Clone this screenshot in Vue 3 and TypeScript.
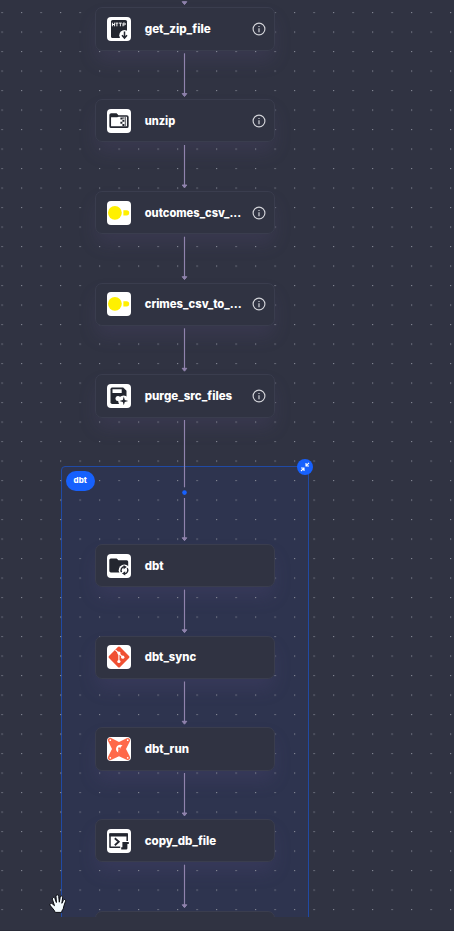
<script setup lang="ts">
type IconName = 'http' | 'zip' | 'duck' | 'purge' | 'folder' | 'git' | 'dbt' | 'shell'

interface FlowNode {
  label: string
  icon: IconName
  y: number
  info: boolean
  width: number
}

interface Edge {
  from: number
  to: number
  arrow: boolean
}

const nodes: FlowNode[] = [
  { label: 'get_zip_file', icon: 'http', y: 7.3, info: true, width: 66 },
  { label: 'unzip', icon: 'zip', y: 99.1, info: true, width: 30.5 },
  { label: 'outcomes_csv_...', icon: 'duck', y: 190.9, info: true, width: 96.5 },
  { label: 'crimes_csv_to_...', icon: 'duck', y: 282.5, info: true, width: 97 },
  { label: 'purge_src_files', icon: 'purge', y: 374.3, info: true, width: 87.5 },
  { label: 'dbt', icon: 'folder', y: 544.1, info: false, width: 19 },
  { label: 'dbt_sync', icon: 'git', y: 635.7, info: false, width: 51.5 },
  { label: 'dbt_run', icon: 'dbt', y: 727.4, info: false, width: 44.3 },
  { label: 'copy_db_file', icon: 'shell', y: 819.2, info: false, width: 71.5 },
]

const edges: Edge[] = [
  { from: 3, to: 5.6, arrow: true },
  { from: 53.3, to: 97.5, arrow: true },
  { from: 145, to: 188.9, arrow: true },
  { from: 236.7, to: 280.6, arrow: true },
  { from: 328.3, to: 372.2, arrow: true },
  { from: 420, to: 487.3, arrow: false },
  { from: 498, to: 541.7, arrow: true },
  { from: 589.6, to: 633.7, arrow: true },
  { from: 681.5, to: 725.2, arrow: true },
  { from: 773, to: 816.9, arrow: true },
  { from: 864.7, to: 908.7, arrow: true },
]
</script>

<template>
  <main class="screen">
    <section class="canvas">
      <div class="cluster"></div>
      <div v-for="n in nodes" :key="'s' + n.label" class="shade" :style="{ top: n.y + 'px' }"></div>
      <svg class="layer" width="454" height="917">
        <defs>
          <pattern id="grid" x="1.5" y="12" width="19.5" height="19.5" patternUnits="userSpaceOnUse">
            <rect width="1.2" height="1.1" fill="#828592" />
          </pattern>
        </defs>
        <rect y="8" width="454" height="909" fill="url(#grid)" />
        <g v-for="e in edges" :key="e.from" stroke="#9083ad" fill="#9083ad">
          <line x1="184.5" x2="184.5" :y1="e.from" :y2="e.arrow ? e.to - 3 : e.to" stroke-width="1.15" />
          <path v-if="e.arrow" :d="`M182.2 ${e.to - 3.9}H186.8L184.5 ${e.to - 1}Z`" stroke-width="1" stroke-linejoin="round" />
        </g>
        <circle cx="184.5" cy="492.6" r="2.3" fill="#1761fd" />
      </svg>

      <article v-for="n in nodes" :key="n.label" class="node" :style="{ top: n.y + 'px' }">
        <span class="tile">
          <svg v-if="n.icon === 'http'" viewBox="0 0 24 24">
            <rect x="4" y="3" width="16" height="18" rx="1.6" fill="#23262f" />
            <path d="M5.4 5.7v3.6M7.6 5.7v3.6M5.4 7.5h2.2M8.5 6.1h2.8M9.9 6.1v3.2M12 6.1h2.8M13.4 6.1v3.2M16 9.3V6.1h1.2q1.3 0 1.3.9t-1.3.9H16" fill="none" stroke="#fff" stroke-width=".95" />
            <circle cx="17.5" cy="18.2" r="5.2" fill="#fff" />
            <path d="M17.5 14.5v6.2M15 18.3l2.5 2.8 2.5-2.8" fill="none" stroke="#23262f" stroke-width="1.5" />
          </svg>
          <svg v-else-if="n.icon === 'zip'" viewBox="0 0 24 24">
            <path d="M3.2 6q0-1 1-1h5l1.8 2h8.8q1 0 1 1v9.2q0 1-1 1H4.2q-1 0-1-1z" fill="#fff" stroke="#23262f" stroke-width="1.7" />
            <path d="M3 5h6.6l2 2.2-1.2 1H3z" fill="#23262f" />
            <path d="M13.4 8.5h2v2h-2zm2 2.2h2v2h-2zm-2 2.1h2v2h-2zm2 2.1h2v2h-2zm0-6.4h2v1h-2z" fill="#23262f" />
            <path d="M18.3 8v9" stroke="#23262f" stroke-width=".8" />
          </svg>
          <svg v-else-if="n.icon === 'duck'" viewBox="0 0 24 24">
            <circle cx="7.9" cy="11.8" r="6.9" fill="#fff000" />
            <path d="M16.4 9.2h3.2a2.6 2.6 0 0 1 0 5.2h-3.2z" fill="#fff000" />
          </svg>
          <svg v-else-if="n.icon === 'purge'" viewBox="0 0 24 24">
            <path d="M5 3.5h11.2l3.3 3.2v8.5L14 20H5.2q-1.7 0-1.7-1.7V5.2Q3.5 3.5 5 3.5z" fill="#23262f" />
            <path d="M5.5 5.2h9.2V9H5.5z" fill="#fff" />
            <circle cx="11" cy="14.6" r="2.5" fill="#fff" />
            <circle cx="16.7" cy="17" r="5.5" fill="#fff" />
            <path d="M16.8 12.6l1 3.3 3.4 1-3.4 1-1 3.4-1-3.4-3.4-1 3.4-1z" fill="#23262f" />
          </svg>
          <svg v-else-if="n.icon === 'folder'" viewBox="0 0 24 24">
            <path d="M2.3 6q0-1.6 1.6-1.6h5.7l1.9 1.9h8.2q1.5 0 1.5 1.5v9q0 1.6-1.5 1.6H3.9q-1.6 0-1.6-1.6z" fill="#23262f" />
            <circle cx="17.4" cy="16.2" r="5.7" fill="#fff" />
            <path d="M17.2 12.8a3.5 3.5 0 0 0-2.6 5.4M17.6 19.7a3.5 3.5 0 0 0 2.6-5.5" fill="none" stroke="#23262f" stroke-width="1.4" />
            <path d="M16.6 11l3.2 2.1-3.2 2.2zM18.2 17.2V21.5L15 19.4z" fill="#23262f" />
          </svg>
          <svg v-else-if="n.icon === 'git'" viewBox="0 0 24 24">
            <path d="M10.9 2q1.1-1.1 2.2 0l8.9 8.9q1.1 1.1 0 2.2l-8.9 8.9q-1.1 1.1-2.2 0l-8.9-8.9q-1.1-1.1 0-2.2z" fill="#f05033" />
            <path d="M8.4 4.8l3.5 3.5v8M12 8.4l3.6 3.7" fill="none" stroke="#fff" stroke-width="1.15" />
            <g fill="#fff"><circle cx="11.9" cy="8.1" r="1.6" /><circle cx="11.9" cy="16.5" r="1.6" /><circle cx="15.8" cy="12.2" r="1.6" /></g>
          </svg>
          <svg v-else-if="n.icon === 'dbt'" viewBox="0 0 24 24">
            <path d="M3.6.8Q1.4.7.9 2.3q-.3 1.1.4 2.3L5 12l-3.8 7.5q-.8 1.5.1 2.8 1.2 1.4 3.2.5L12 19.2l7.6 3.6q1.8.8 3-.5 1-1.2.2-2.8L19 12l3.8-7.5q.8-1.6-.2-2.7-1.2-1.4-3-.5L12 5 4.6 1.2z" fill="#ff694a" />
            <path d="M15.5 8.6a4.1 4.1 0 0 0-6.3 2.2 4 4 0 0 0 2.2 4.7 1.7 1.7 0 0 1-.3-1.2c0-1.9 2.7-1.3 2.7-3.2 0-1.1.6-1.8 1.7-2.5z" fill="#fff" />
            <path d="M11.2 10.5h2.5v2.3h-2.5z" fill="#ff694a" />
            <g fill="#fff"><circle cx="3.3" cy="3.2" r=".85" /><circle cx="20.7" cy="3.2" r=".85" /><circle cx="3.3" cy="20.8" r=".85" /><circle cx="20.7" cy="20.8" r=".85" /></g>
          </svg>
          <svg v-else viewBox="0 0 24 24">
            <path d="M3 5h17.2v13.3H3z" fill="#fff" stroke="#23262f" stroke-width="1.5" stroke-linejoin="round" />
            <path d="M2.4 4.4h18.4v3.2H2.4z" fill="#23262f" />
            <path d="M7.8 9.3l4 3.5-4 3.5" fill="none" stroke="#23262f" stroke-width="1.8" />
            <path d="M13.2 12h9v9.5h-9z" fill="#fff" />
            <path d="M15.4 13h6.4v2h-1.4v4.2q0 1.3-1.2 1.3h-5v-2.3h1.2z" fill="#23262f" />
          </svg>
        </span>
        <svg class="label" :width="n.width" height="18">
          <text x="-0.3" y="13" :textLength="n.width" lengthAdjust="spacingAndGlyphs">{{ n.label }}</text>
        </svg>
        <svg v-if="n.info" class="info" viewBox="0 0 14 14">
          <circle cx="7" cy="7" r="5.9" fill="none" stroke="#d3d4d9" stroke-width="1.15" />
          <path d="M7 6.2v4M7 3.9v1.2" stroke="#d3d4d9" stroke-width="1.2" />
        </svg>
      </article>
      <article class="node" :style="{ top: '911px' }"></article>

      <span class="badge">dbt</span>
      <button class="collapse" aria-label="Collapse">
        <svg viewBox="0 0 16 16">
          <path d="M12 3.8L9.3 6.6M9 4v3h3M4 12l2.7-2.7M4 9h3v3" fill="none" stroke="#fff" stroke-width="1.1" />
        </svg>
      </button>
    </section>

    <svg class="hand" width="18" height="20" viewBox="0 0 18 20">
      <path d="M5.2 16.3L1.4 11.8Q.4 10.3 1.4 9.6q1.2-.7 2.4.6l1.7 1.5L3.4 5.3q-.4-1.6.7-2 1.2-.3 1.8 1.2l1.5 4-.4-6.2Q7.1.8 8.3.8q1.2 0 1.4 1.5l.6 5.9.9-5.1q.4-1.4 1.5-1.1 1.1.3.9 1.8l-.7 5.5 1.5-3.1q.7-1.2 1.6-.8 1 .6.5 1.9l-1.6 4.6q-.3 3.5-2.1 5.2v1.3H6.2z" fill="#f4fbff" stroke="#090a10" stroke-width="1" stroke-linejoin="round" />
    </svg>
  </main>
</template>

<style>
body {
  margin: 0;
  background: #303342;
}
</style>

<style scoped>
.screen {
  position: relative;
  box-sizing: border-box;
  width: 454px;
  height: 931px;
  overflow: hidden;
  background: #303342;
  border-bottom: 1px solid #292b38;
  font-family: Inter, "Liberation Sans", sans-serif;
}
.canvas {
  position: relative;
  height: 917px;
  overflow: hidden;
}
.layer {
  position: absolute;
  inset: 0;
}
.cluster {
  position: absolute;
  left: 60.5px;
  top: 466px;
  box-sizing: border-box;
  width: 248.5px;
  height: 470px;
  border: 1px solid #204aa5;
  border-radius: 4px;
  background: rgba(38, 64, 150, 0.16);
}
.shade,
.node {
  position: absolute;
  left: 95px;
  box-sizing: border-box;
  width: 180px;
  height: 43.3px;
  border-radius: 7px;
}
.shade {
  box-shadow: 0 11px 18px -1px rgba(98, 84, 140, 0.17);
}
.node {
  display: flex;
  align-items: center;
  padding: 0 8.5px 0 11px;
  border: 1px solid #3a3d4e;
  background: #303342;
}
.tile {
  display: flex;
  width: 24px;
  height: 24px;
  margin-right: 14px;
  border-radius: 4px;
  background: #fff;
  overflow: hidden;
}
.tile svg {
  width: 24px;
  height: 24px;
}
.label {
  overflow: visible;
}
.label text {
  fill: #fff;
  font-size: 11.5px;
  font-weight: 800;
}
.info {
  width: 14px;
  height: 14px;
  margin-left: auto;
}
.badge {
  position: absolute;
  left: 66px;
  top: 471.3px;
  width: 28.5px;
  height: 19.6px;
  border-radius: 10px;
  background: #1761fd;
  color: #fff;
  font-size: 8px;
  font-weight: 800;
  line-height: 18.5px;
  text-align: center;
}
.collapse {
  position: absolute;
  left: 297px;
  top: 459px;
  display: flex;
  width: 16px;
  height: 16px;
  padding: 0;
  border: 0;
  border-radius: 50%;
  background: #1761fd;
}
.collapse svg {
  width: 16px;
  height: 16px;
}
.hand {
  position: absolute;
  left: 48.5px;
  top: 894px;
}
</style>
